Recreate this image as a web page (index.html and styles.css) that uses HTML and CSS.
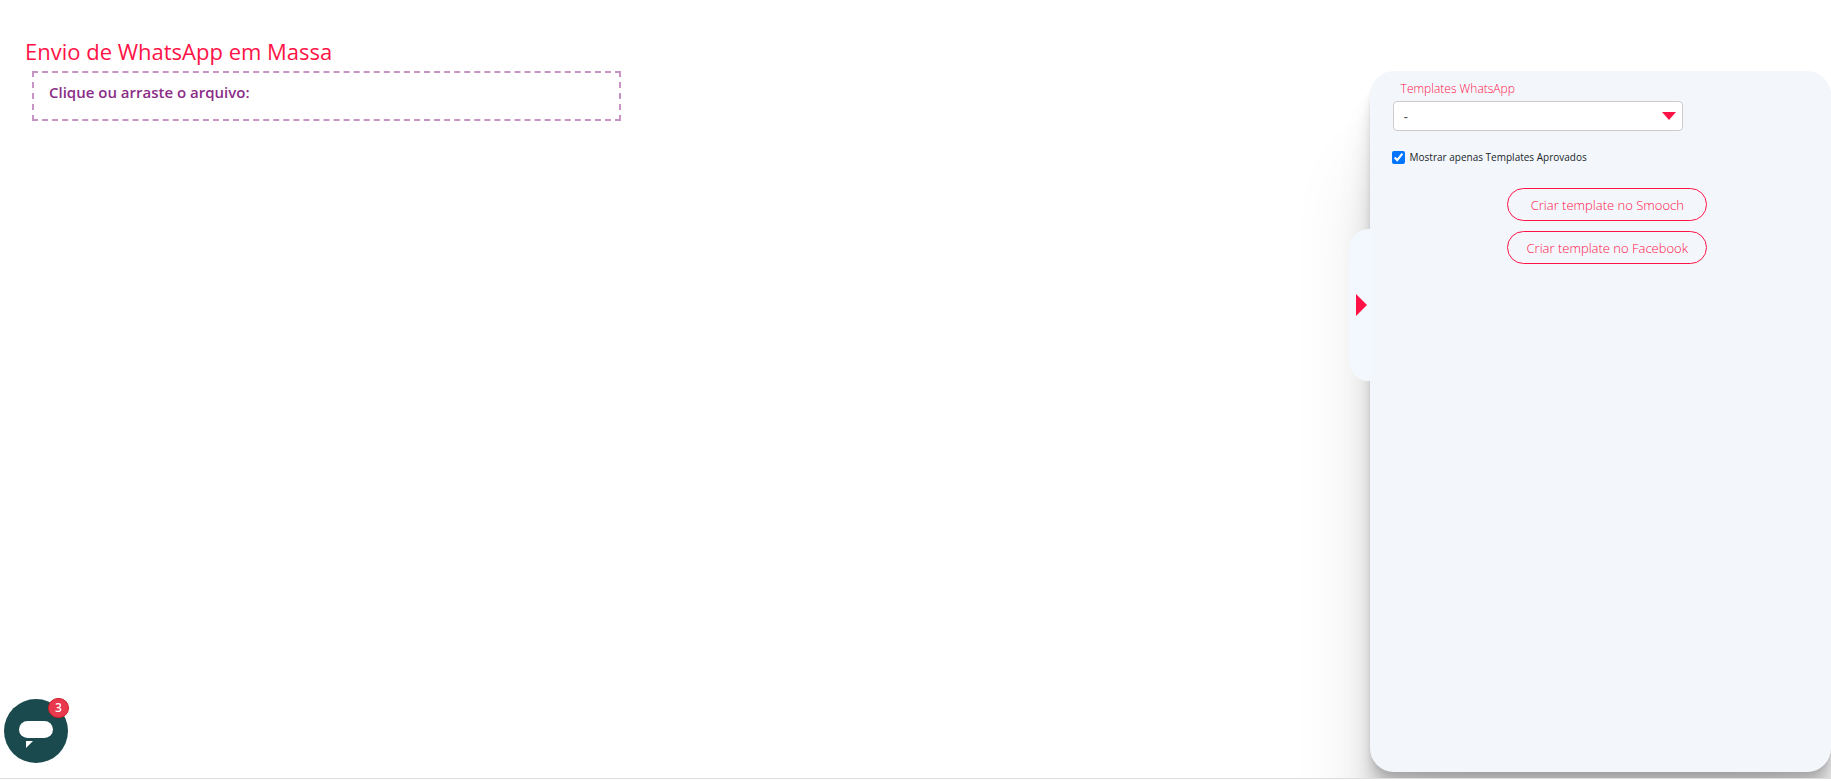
FILE: index.html
```html
<!DOCTYPE html>
<html lang="pt-BR">
<head>
<meta charset="utf-8">
<meta name="viewport" content="width=device-width, initial-scale=1">
<title>Envio de WhatsApp em Massa</title>
<link rel="stylesheet" href="styles.css">
</head>
<body>
<div class="page">
  <main class="content">
    <h1 class="title">Envio de WhatsApp em Massa</h1>
    <label class="dropzone" for="file">Clique ou arraste o arquivo:</label>
    <input class="file-input" id="file" type="file">
  </main>
  <aside class="panel">
    <button class="panel-toggle" type="button" aria-label="Recolher painel">
      <svg width="11" height="22" viewBox="0 0 11 22" aria-hidden="true"><path d="M0 0L11 11L0 22Z" fill="#ff1346"/></svg>
    </button>
    <label class="field-label" for="template">Templates WhatsApp</label>
    <div class="select-wrap">
      <select class="select" id="template"><option>-</option></select>
      <svg class="select-arrow" width="14" height="8" viewBox="0 0 14 8" aria-hidden="true"><path d="M0 0H14L7 8Z" fill="#ff1346"/></svg>
    </div>
    <div class="check">
      <input class="checkbox" id="approved" type="checkbox" checked>
      <label for="approved">Mostrar apenas Templates Aprovados</label>
    </div>
    <div class="actions">
      <button class="pill" type="button">Criar template no Smooch</button>
      <button class="pill" type="button">Criar template no Facebook</button>
    </div>
  </aside>
</div>
<footer class="footer"></footer>
<button class="chat" type="button" aria-label="Abrir chat">
  <svg width="64" height="64" viewBox="0 0 64 64" aria-hidden="true">
    <circle cx="32" cy="32" r="32" fill="#1a4a4e"/>
    <rect x="15" y="22" width="34" height="17" rx="8.5" fill="#fff"/>
    <path d="M22 42H29L22 49Z" fill="#fff"/>
  </svg>
  <span class="badge">3</span>
</button>
</body>
</html>
```
FILE: styles.css
```css
* {
  box-sizing: border-box;
}

body {
  margin: 0;
  min-height: 100vh;
  display: flex;
  flex-direction: column;
  overflow: hidden;
  background: #fff;
  font-family: "Open Sans", "Noto Sans", sans-serif;
}

button {
  font: inherit;
  cursor: pointer;
}

.page {
  flex: 1;
  display: flex;
  justify-content: space-between;
  overflow: hidden;
}

.content {
  flex: 1;
  padding: 32px 0 0 25px;
}

.title {
  margin: 0;
  color: #ff1346;
  font-size: 22px;
  font-weight: 400;
  line-height: 39px;
}

.dropzone {
  display: block;
  width: 43.8%;
  min-height: 50px;
  margin-left: 7px;
  padding: 7px 15px;
  border: 2px dashed #c894c5;
  color: #8b2d88;
  font-size: 15px;
  font-weight: 600;
  line-height: 24px;
}

.file-input {
  position: absolute;
  width: 1px;
  height: 1px;
  opacity: 0;
}

.panel {
  position: relative;
  width: 25.2%;
  margin: 71px 0 6px;
  padding: 6px 23px;
  border-radius: 24px;
  background: #f3f7fc;
  box-shadow:
    0 3px 2px rgba(0, 0, 0, 0.034),
    0 7px 5px rgba(0, 0, 0, 0.048),
    0 13px 10px rgba(0, 0, 0, 0.06),
    0 22px 18px rgba(0, 0, 0, 0.072),
    0 42px 33px rgba(0, 0, 0, 0.086),
    0 100px 80px rgba(0, 0, 0, 0.12);
}

.panel-toggle {
  position: absolute;
  top: 158px;
  left: -21px;
  width: 21px;
  height: 152px;
  display: flex;
  align-items: center;
  padding: 0 0 0 7px;
  border: 0;
  border-radius: 20px 0 0 20px;
  background: #f2f8fd;
}

.field-label {
  display: block;
  padding-left: 8px;
  color: #ff1346;
  font-size: 12px;
  font-weight: 350;
  line-height: 24px;
}

.select-wrap {
  position: relative;
  width: 70%;
}

.select {
  display: block;
  width: 100%;
  height: 30px;
  padding: 0 10px;
  border: 1px solid #ccc;
  border-radius: 4px;
  appearance: none;
  background: #fff;
  color: #555;
  font: 14px "Open Sans", sans-serif;
}

.select-arrow {
  position: absolute;
  top: 11px;
  right: 7px;
  pointer-events: none;
}

.check {
  display: flex;
  align-items: center;
  gap: 5px;
  margin-top: 18px;
  color: #212529;
  font-size: 10px;
  font-weight: 500;
  line-height: 16px;
}

.checkbox {
  width: 13px;
  height: 13px;
  margin: 0 0 0 -1px;
}

.actions {
  display: flex;
  flex-direction: column;
  align-items: center;
  gap: 10px;
  margin-top: 23px;
  padding-left: 14px;
}

.pill {
  width: 200px;
  height: 33px;
  padding: 0;
  border: 1px solid #ff1346;
  border-radius: 17px;
  background: transparent;
  color: #ff1346;
  font-size: 13px;
  font-weight: 350;
}

.footer {
  height: 3px;
  border-top: 1px solid #ddd;
}

.chat {
  position: fixed;
  bottom: 18px;
  left: 4px;
  padding: 0;
  border: 0;
  background: none;
}

.chat svg {
  display: block;
}

.badge {
  position: absolute;
  top: -1px;
  right: -1px;
  width: 21px;
  height: 20px;
  border: 1px solid #d01c24;
  border-radius: 10px;
  background: #e8394f;
  color: #fff;
  font-size: 12px;
  font-weight: 600;
  line-height: 18px;
}
```
